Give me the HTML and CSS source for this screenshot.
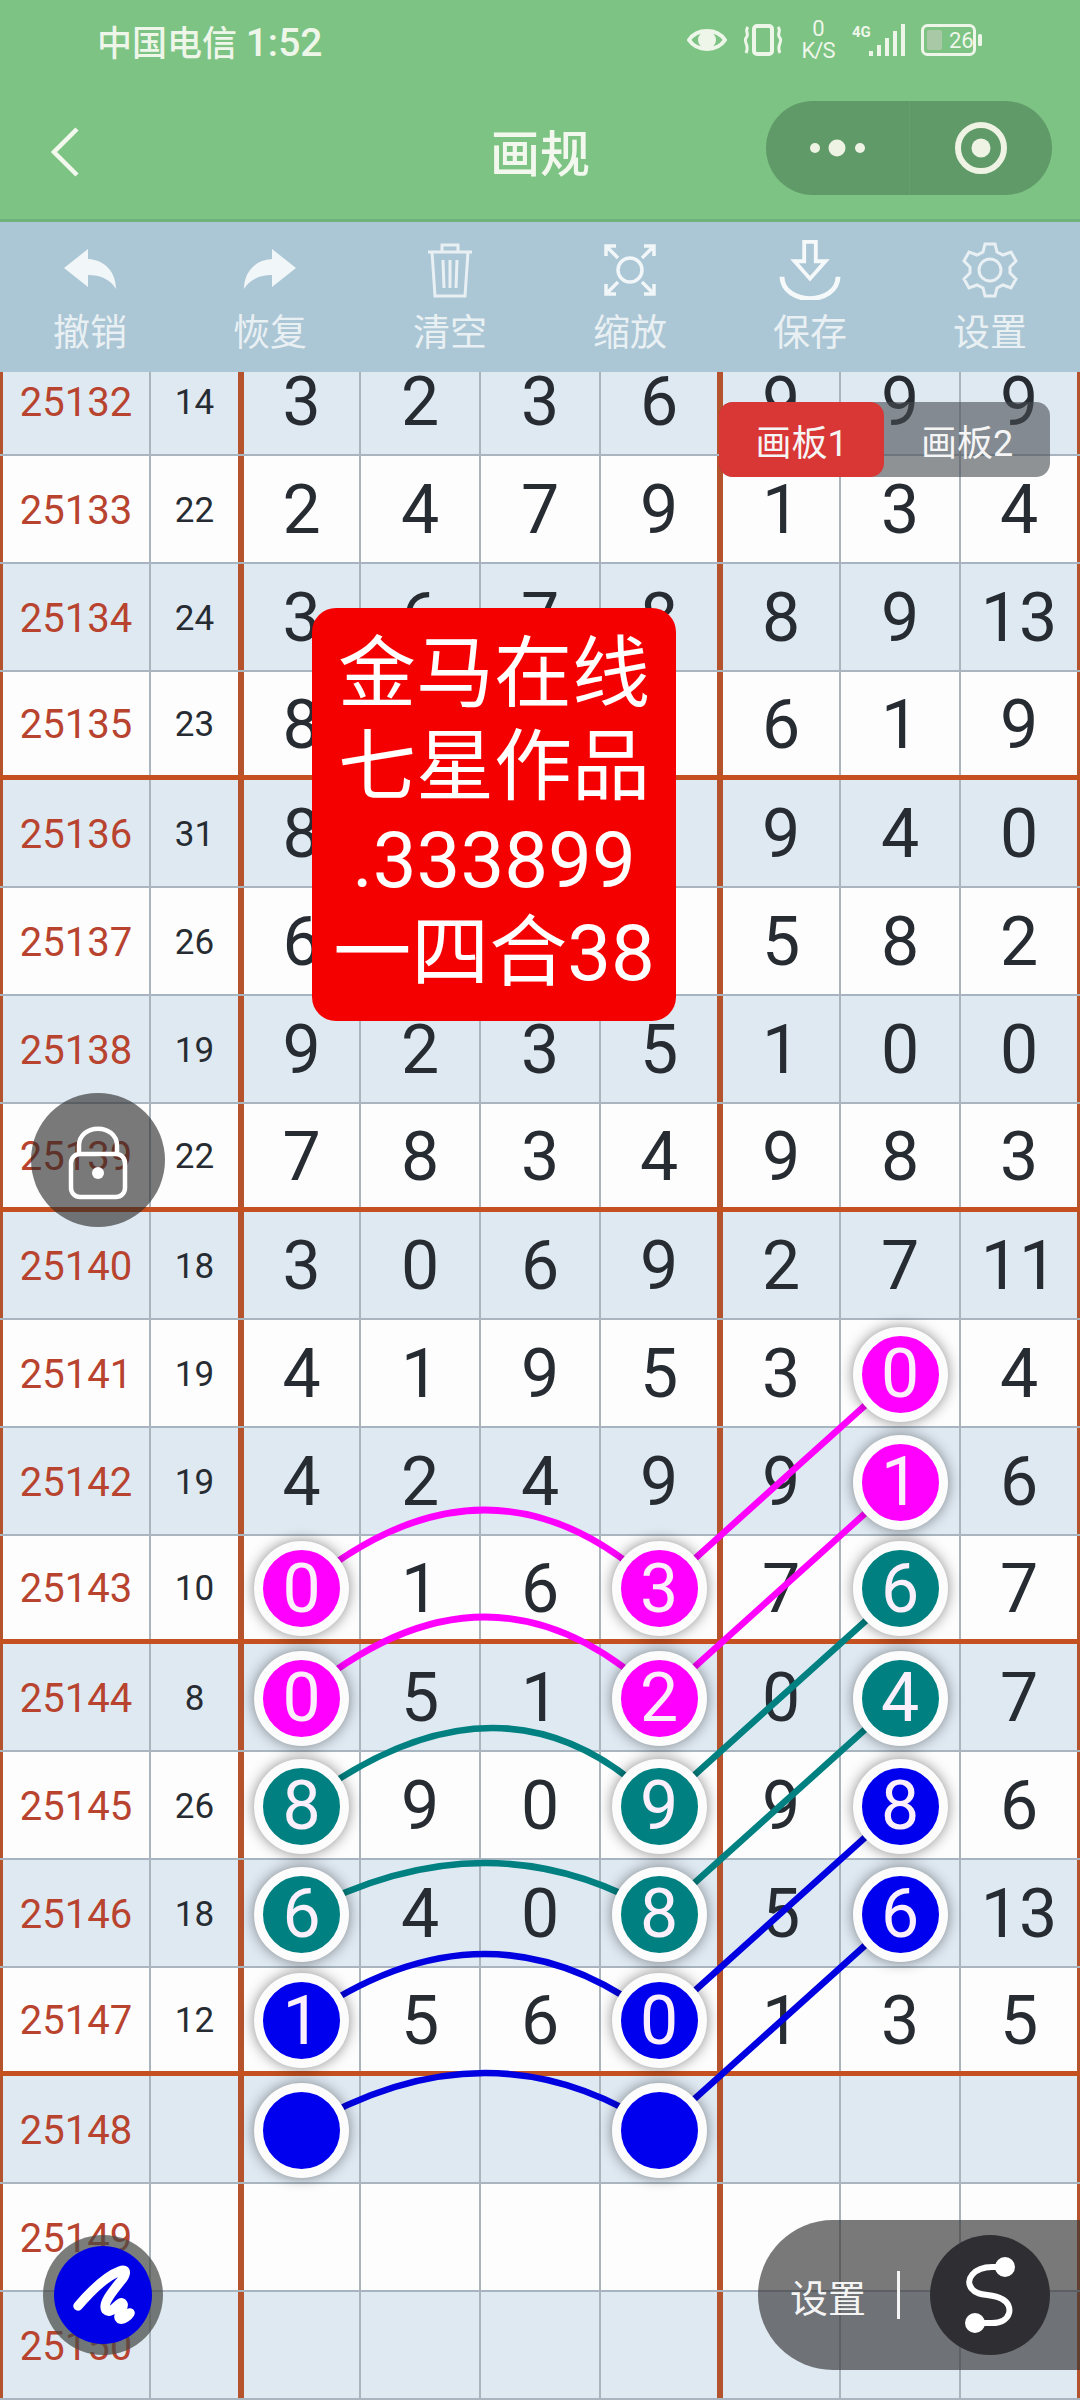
FILE: index.html
```html
<!DOCTYPE html>
<html lang="zh">
<head>
  <meta charset="UTF-8" />
  <meta name="viewport" content="width=device-width, initial-scale=1" />
  <title>画规</title>
  <link rel="stylesheet" href="styles.css">
</head>
<body>
<div class="app">

  <!-- top green header -->
  <header class="header">
    <div class="status">
      <span class="carrier">中国电信 <span class="clock">1:52</span></span>
      <div class="status-icons">
        <svg width="40" height="30" viewBox="0 0 40 30" fill="none" stroke="#eef6ea" stroke-width="4"><path d="M2 15C10 3 30 3 38 15C30 27 10 27 2 15Z"/><circle cx="20" cy="15" r="7" fill="#eef6ea"/></svg>
        <svg width="42" height="32" viewBox="0 0 42 32" fill="none" stroke="#eef6ea" stroke-width="4"><rect x="12" y="2" width="18" height="28" rx="3"/><path d="M6 3C2 7 8 10 4 14C1 18 8 21 4 29M36 3C40 7 34 10 38 14C41 18 34 21 38 29" stroke-width="3"/></svg>
        <div class="net"><span>0</span><span>K/S</span></div>
        <svg class="signal" width="54" height="32" viewBox="0 0 54 32" fill="#eef6ea"><text x="0" y="13">4G</text><rect x="17" y="27" width="4" height="5"/><rect x="25" y="21" width="4" height="11"/><rect x="33" y="14" width="4" height="18"/><rect x="41" y="7" width="4" height="25"/><rect x="49" y="0" width="4" height="32"/></svg>
        <svg class="battery" width="62" height="32" viewBox="0 0 62 32"><rect x="1.5" y="1.5" width="52" height="29" rx="5" fill="none" stroke="#eef6ea" stroke-width="3"/><rect x="6" y="6" width="15" height="20" rx="2" fill="#a9c9a6"/><rect x="57" y="10" width="4" height="12" rx="1.5" fill="#eef6ea"/><text x="28" y="24">26</text></svg>
      </div>
    </div>
    <div class="nav">
      <svg class="back" width="28" height="50" viewBox="0 0 28 50" fill="none" stroke="#f3f8ee" stroke-width="4.5"><path d="M26 2L3 25L26 48"/></svg>
      <h1 class="title">画规</h1>
      <div class="capsule">
        <div class="capsule-part">
          <svg width="60" height="24" viewBox="0 0 60 24" fill="#eef3e4"><circle cx="8" cy="12" r="5"/><circle cx="30" cy="12" r="8.5"/><circle cx="53" cy="12" r="5"/></svg>
        </div>
        <div class="capsule-part">
          <svg width="56" height="56" viewBox="0 0 56 56" fill="none"><circle cx="28" cy="28" r="23" stroke="#eef3e4" stroke-width="6"/><circle cx="28" cy="28" r="9.5" fill="#eef3e4"/></svg>
        </div>
      </div>
    </div>
  </header>

  <!-- toolbar -->
  <nav class="toolbar">
    <div class="tool">
      <svg width="60" height="60" viewBox="0 0 60 60" fill="#f1f6f8"><path d="M4 28L28 9V19C46 20 56 33 56 49C50 39 40 35 28 35V47Z"/></svg>
      <span>撤销</span>
    </div>
    <div class="tool">
      <svg width="60" height="60" viewBox="0 0 60 60" fill="#f1f6f8"><path d="M56 28L32 9V19C14 20 4 33 4 49C10 39 20 35 32 35V47Z"/></svg>
      <span>恢复</span>
    </div>
    <div class="tool">
      <svg width="60" height="60" viewBox="0 0 60 60" fill="none" stroke="#e9f0f4" stroke-width="3"><path d="M8 12H52M22 12V5H38V12M12 12L15 56H45L48 12M23 20L24 48M30 20V48M37 20L36 48"/></svg>
      <span>清空</span>
    </div>
    <div class="tool">
      <svg width="60" height="60" viewBox="0 0 60 60" fill="none" stroke="#f1f6f8" stroke-width="3.5"><circle cx="30" cy="30" r="12"/><path d="M6 16V6H16M6 6L18 18M44 6H54V16M54 6L42 18M6 44V54H16M6 54L18 42M44 54H54V44M54 54L42 42"/></svg>
      <span>缩放</span>
    </div>
    <div class="tool">
      <svg width="64" height="62" viewBox="0 0 64 62" fill="none" stroke="#f5f9fa" stroke-width="4"><path d="M26 2H38V22H48L32 40L16 22H26Z"/><path d="M3 38C4 68 60 68 61 38" stroke-width="5"/></svg>
      <span>保存</span>
    </div>
    <div class="tool">
      <svg width="60" height="60" viewBox="0 0 60 60" fill="none" stroke="#e9f0f4" stroke-width="3"><circle cx="30" cy="30" r="11"/><path d="M25 4H35L37 12L43 15L51 12L56 21L50 27V33L56 39L51 48L43 45L37 48L35 56H25L23 48L17 45L9 48L4 39L10 33V27L4 21L9 12L17 15L23 12Z"/></svg>
      <span>设置</span>
    </div>
  </nav>

  <!-- number grid, first row runs under the toolbar -->
  <main class="sheet">
    <div class="board">
      <div class="row tint"><b>25132</b><i>14</i><span>3</span><span>2</span><span>3</span><span>6</span><span>9</span><span>9</span><span>9</span></div>
      <div class="row"><b>25133</b><i>22</i><span>2</span><span>4</span><span>7</span><span>9</span><span>1</span><span>3</span><span>4</span></div>
      <div class="row tint"><b>25134</b><i>24</i><span>3</span><span>6</span><span>7</span><span>8</span><span>8</span><span>9</span><span>13</span></div>
      <div class="row thick"><b>25135</b><i>23</i><span>8</span><span>3</span><span>7</span><span>5</span><span>6</span><span>1</span><span>9</span></div>
      <div class="row tint"><b>25136</b><i>31</i><span>8</span><span>9</span><span>7</span><span>7</span><span>9</span><span>4</span><span>0</span></div>
      <div class="row"><b>25137</b><i>26</i><span>6</span><span>8</span><span>5</span><span>7</span><span>5</span><span>8</span><span>2</span></div>
      <div class="row tint"><b>25138</b><i>19</i><span>9</span><span>2</span><span>3</span><span>5</span><span>1</span><span>0</span><span>0</span></div>
      <div class="row thick"><b>25139</b><i>22</i><span>7</span><span>8</span><span>3</span><span>4</span><span>9</span><span>8</span><span>3</span></div>
      <div class="row tint"><b>25140</b><i>18</i><span>3</span><span>0</span><span>6</span><span>9</span><span>2</span><span>7</span><span>11</span></div>
      <div class="row"><b>25141</b><i>19</i><span>4</span><span>1</span><span>9</span><span>5</span><span>3</span><span><em class="ball pink">0</em></span><span>4</span></div>
      <div class="row tint"><b>25142</b><i>19</i><span>4</span><span>2</span><span>4</span><span>9</span><span>9</span><span><em class="ball pink">1</em></span><span>6</span></div>
      <div class="row thick"><b>25143</b><i>10</i><span><em class="ball pink">0</em></span><span>1</span><span>6</span><span><em class="ball pink">3</em></span><span>7</span><span><em class="ball teal">6</em></span><span>7</span></div>
      <div class="row tint"><b>25144</b><i>8</i><span><em class="ball pink">0</em></span><span>5</span><span>1</span><span><em class="ball pink">2</em></span><span>0</span><span><em class="ball teal">4</em></span><span>7</span></div>
      <div class="row"><b>25145</b><i>26</i><span><em class="ball teal">8</em></span><span>9</span><span>0</span><span><em class="ball teal">9</em></span><span>9</span><span><em class="ball blue">8</em></span><span>6</span></div>
      <div class="row tint"><b>25146</b><i>18</i><span><em class="ball teal">6</em></span><span>4</span><span>0</span><span><em class="ball teal">8</em></span><span>5</span><span><em class="ball blue">6</em></span><span>13</span></div>
      <div class="row thick"><b>25147</b><i>12</i><span><em class="ball blue">1</em></span><span>5</span><span>6</span><span><em class="ball blue">0</em></span><span>1</span><span>3</span><span>5</span></div>
      <div class="row tint"><b>25148</b><i></i><span><em class="ball blue"></em></span><span></span><span></span><span><em class="ball blue"></em></span><span></span><span></span><span></span></div>
      <div class="row"><b>25149</b><i></i><span></span><span></span><span></span><span></span><span></span><span></span><span></span></div>
      <div class="row tint"><b>25150</b><i></i><span></span><span></span><span></span><span></span><span></span><span></span><span></span></div>

      <!-- lines between the balls, in page coordinates -->
      <svg class="lines" width="1080" height="2052" viewBox="0 348 1080 2052" fill="none" stroke-width="6.5">
        <g stroke="#ff00ff">
          <path d="M300 1590Q490 1430 660 1590L900 1374"/>
          <path d="M300 1698Q490 1536 660 1698L900 1482"/>
        </g>
        <g stroke="#008080">
          <path d="M300 1806Q505 1650 660 1806L900 1590"/>
          <path d="M300 1914Q490 1812 660 1914L900 1698"/>
        </g>
        <g stroke="#0000e0">
          <path d="M300 2022Q490 1886 660 2022L900 1806"/>
          <path d="M300 2130Q490 2016 660 2130L900 1914"/>
        </g>
      </svg>
    </div>
  </main>

  <!-- floating things over the grid -->
  <div class="tabs">
    <div class="tab active">画板1</div>
    <div class="tab">画板2</div>
  </div>

  <div class="banner">金马在线<br>七星作品<br>.333899<br>一四合38</div>

  <div class="lock">
    <svg width="60" height="74" viewBox="0 0 60 74" fill="none" stroke="#fff" stroke-width="4.5"><path d="M11 30V20C11 -3 49 -3 49 20V30"/><rect x="3" y="28" width="54" height="43" rx="9"/><circle cx="30" cy="47" r="6" fill="#fff" stroke="none"/></svg>
  </div>

  <div class="pen">
    <svg width="98" height="98" viewBox="0 0 98 98" fill="none" stroke="#fff" stroke-width="9.5" stroke-linecap="round" stroke-linejoin="round"><path d="M24 60C36 46 52 30 66 25C74 22 72 30 66 36C58 46 48 58 52 64C58 70 66 52 69 58C71 62 62 70 66 73C70 74 74 70 76 67"/></svg>
  </div>

  <div class="settings">
    <span class="settings-label">设置</span>
    <span class="settings-bar"></span>
    <div class="settings-btn">
      <svg width="120" height="120" viewBox="0 0 120 120" fill="none" stroke="#fff" stroke-width="6"><path d="M75 32H62C44 32 34 45 42 54C48 62 62 58 72 64C84 70 82 88 62 88H45"/><circle cx="75" cy="32" r="7" fill="#fff"/><circle cx="45" cy="88" r="7" fill="#fff"/></svg>
    </div>
  </div>

</div>
</body>
</html>
```

FILE: styles.css
```css
body {
  margin: 0;
  background: #fff;
  font-family: Roboto, "Noto Sans CJK SC", sans-serif;
}
.app {
  position: relative;
  width: 1080px;
  height: 2400px;
  overflow: hidden;
  display: flex;
  flex-direction: column;
}

/* header */
.header {
  height: 222px;
  box-sizing: border-box;
  background: #7dc383;
  border-bottom: 3px solid #70b179;
  flex: none;
}
.status {
  height: 80px;
  box-sizing: border-box;
  padding: 0 97px;
  display: flex;
  justify-content: space-between;
  align-items: center;
  color: #eef6ea;
}
.carrier {
  font-size: 35px;
  font-weight: 500;
}
.clock {
  font-size: 39px;
}
.status-icons {
  display: flex;
  align-items: center;
  gap: 15px;
}
.net {
  width: 38px;
  display: flex;
  flex-direction: column;
  align-items: center;
  font-size: 22px;
  line-height: 22px;
  letter-spacing: -1px;
}
.signal text {
  font-size: 15px;
  font-weight: 700;
  font-family: Roboto, sans-serif;
}
.battery text {
  font-size: 22px;
  font-family: Roboto, sans-serif;
  fill: #eef6ea;
}
.nav {
  position: relative;
  height: 139px;
  display: flex;
  align-items: center;
  justify-content: space-between;
  padding: 0 28px 0 51px;
}
.title {
  margin: 0;
  position: absolute;
  left: 0;
  right: 0;
  text-align: center;
  font-size: 50px;
  font-weight: 500;
  color: #f3f8ee;
}
.back {
  margin-top: 4px;
}
.capsule {
  width: 286px;
  height: 94px;
  margin-top: -4px;
  border-radius: 47px;
  background: #5f9a68;
  display: flex;
}
.capsule-part {
  flex: 1;
  display: flex;
  align-items: center;
  justify-content: center;
}
.capsule-part + .capsule-part {
  border-left: 1px solid #679f6f;
}

/* toolbar */
.toolbar {
  height: 150px;
  box-sizing: border-box;
  flex: none;
  position: relative;
  z-index: 2;
  background: #abc6d5;
  display: grid;
  grid-template-columns: repeat(6, 180px);
  padding-top: 18px;
}
.tool {
  display: flex;
  flex-direction: column;
  align-items: center;
}
.tool svg {
  height: 60px;
}
.tool span {
  margin-top: 14px;
  font-size: 37px;
  line-height: 40px;
  color: #e9f0f3;
}

/* grid */
.sheet {
  flex: 1;
  overflow: hidden;
}
.board {
  position: relative;
  margin-top: -24px;
}
.row {
  display: grid;
  grid-template-columns: 151px 93px 117px 120px 120px 122px 118px 120px 119px;
  height: 108px;
  box-sizing: border-box;
  background: #fdfdfd;
  border-bottom: 2px solid #a8b5c0;
}
.row.tint {
  background: #dfe9f2;
}
.row.thick {
  border-bottom: 5px solid #c4511f;
}
.row > * {
  display: flex;
  align-items: center;
  justify-content: center;
  box-sizing: border-box;
  padding-top: 2px;
  border-right: 2px solid #aab4bd;
  font-style: normal;
  font-weight: 400;
  color: #272c33;
}
.row > b {
  border-left: 3px solid #b5532d;
  font-size: 40px;
  color: #b8432f;
}
.row > i {
  font-size: 35px;
}
.row > span {
  font-size: 68px;
}
.row > :nth-child(2),
.row > :nth-child(6) {
  border-right: 6px solid #b5532d;
}
.row > :nth-child(9) {
  border-right: 3px solid #b5532d;
}
.ball {
  position: relative;
  z-index: 2;
  width: 95px;
  height: 95px;
  flex: none;
  box-sizing: border-box;
  border: 9px solid #fcfcfc;
  border-radius: 50%;
  box-shadow: 0 0 14px rgba(0, 0, 0, 0.45);
  display: flex;
  align-items: center;
  justify-content: center;
  font-style: normal;
  color: #fbeffb;
}
.pink { background: #ff00ff; }
.teal { background: #008080; }
.blue { background: #0000ee; }
.lines {
  position: absolute;
  top: 0;
  left: 0;
  z-index: 1;
}

/* floating */
.tabs {
  position: absolute;
  z-index: 3;
  left: 719px;
  top: 402px;
  width: 331px;
  height: 75px;
  border-radius: 14px;
  background: rgba(70, 75, 80, 0.6);
  display: flex;
}
.tab {
  flex: 1;
  display: flex;
  align-items: center;
  justify-content: center;
  border-radius: 14px;
  font-size: 36px;
  color: #f5f5f5;
}
.tab.active {
  flex: none;
  width: 165px;
  background: #d93636;
}
.banner {
  position: absolute;
  z-index: 3;
  left: 312px;
  top: 608px;
  width: 364px;
  height: 413px;
  box-sizing: border-box;
  padding-top: 20px;
  border-radius: 24px;
  background: #f50000;
  color: #fff;
  font-size: 78px;
  line-height: 93px;
  text-align: center;
}
.lock {
  position: absolute;
  z-index: 3;
  left: 31px;
  top: 1093px;
  width: 134px;
  height: 134px;
  border-radius: 50%;
  background: rgba(40, 40, 40, 0.62);
  display: flex;
  align-items: center;
  justify-content: center;
}
.lock svg {
  margin-top: 6px;
}
.pen {
  position: absolute;
  z-index: 3;
  left: 54px;
  top: 2246px;
  width: 98px;
  height: 98px;
  border-radius: 50%;
  background: #0000e6;
  box-shadow: 0 0 0 11px rgba(70, 75, 70, 0.72);
}
.settings {
  position: absolute;
  z-index: 3;
  left: 758px;
  top: 2220px;
  right: 0;
  height: 150px;
  box-sizing: border-box;
  border-radius: 75px 0 0 75px;
  background: rgba(50, 50, 50, 0.65);
  padding-left: 32px;
  display: flex;
  align-items: center;
  color: #f4f4f4;
}
.settings-label {
  font-size: 38px;
}
.settings-bar {
  width: 3px;
  height: 48px;
  margin-left: 31px;
  background: #f4f4f4;
}
.settings-btn {
  position: absolute;
  left: 172px;
  top: 15px;
  width: 120px;
  height: 120px;
  border-radius: 50%;
  background: #2f2f33;
}
.settings-btn svg {
  display: block;
}
```
